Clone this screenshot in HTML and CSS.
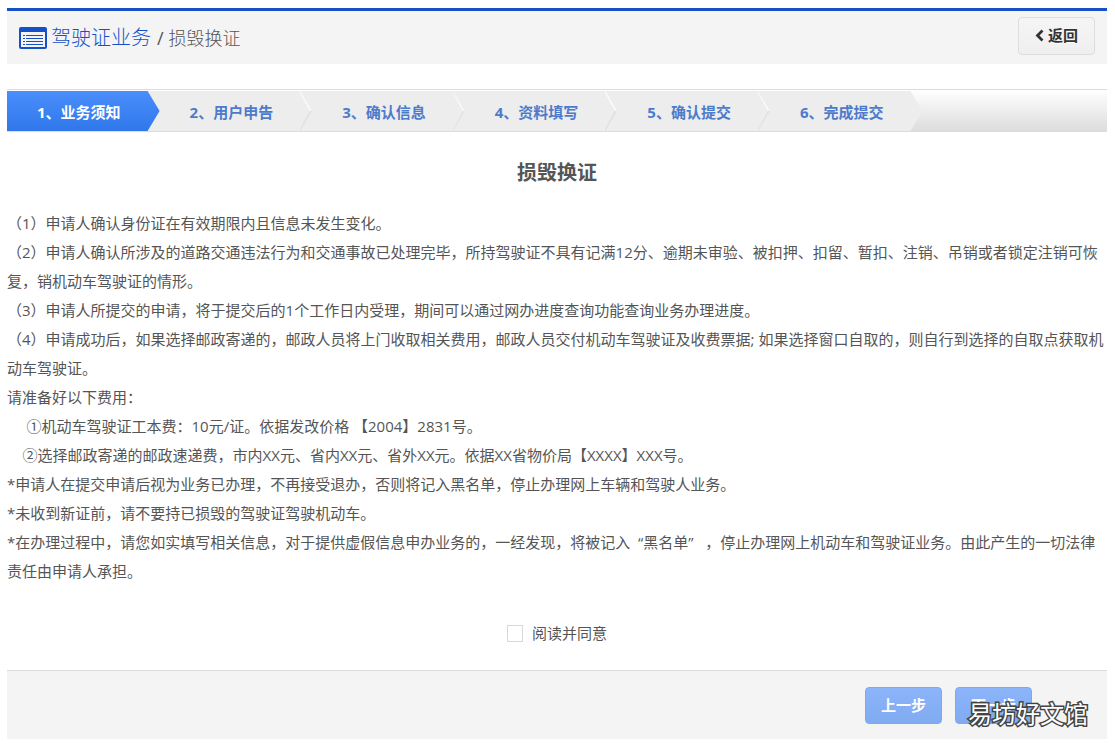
FILE: index.html
```html
<!DOCTYPE html>
<html lang="zh-CN">
<head>
<meta charset="utf-8">
<meta name="viewport" content="width=device-width, initial-scale=1">
<title>驾驶证业务 - 损毁换证</title>
<link rel="stylesheet" href="styles.css">
</head>
<body>
<header class="page-header">
  <svg class="header-icon" viewBox="0 0 28 22" aria-hidden="true">
    <rect x="1" y="1" width="26" height="20" rx="1" fill="#f4f4f4" stroke="#1450c8" stroke-width="2"/>
    <path d="M1 1h26v4H1z" fill="#1450c8"/>
    <path d="M4 8h2v1H4zM4 11h2v1H4zM4 14h2v1H4zM4 17h2v1H4zM7 8h17v1H7zM7 11h17v1H7zM7 14h17v1H7zM7 17h17v1H7z" fill="#1450c8"/>
  </svg>
  <h1 class="header-title">驾驶证业务</h1>
  <span class="header-slash">/</span>
  <span class="header-sub">损毁换证</span>
  <button class="btn btn-back" type="button">
    <svg class="back-icon" viewBox="0 0 9 13" aria-hidden="true"><path d="M7.500 1.500L2.500 6.500l5 5" fill="none" stroke="#333" stroke-width="2.800"/></svg>
    返回
  </button>
</header>

<ol class="steps">
  <li class="step step-active">1、业务须知</li>
  <li class="step">2、用户申告<svg class="step-edge" viewBox="0 0 12 40" preserveAspectRatio="none" aria-hidden="true"><path d="M0 0l11 20" stroke="#fff"/><path d="M11 20L0 40" stroke="#dcdcdc"/></svg></li>
  <li class="step">3、确认信息<svg class="step-edge" viewBox="0 0 12 40" preserveAspectRatio="none" aria-hidden="true"><path d="M0 0l11 20" stroke="#fff"/><path d="M11 20L0 40" stroke="#dcdcdc"/></svg></li>
  <li class="step">4、资料填写<svg class="step-edge" viewBox="0 0 12 40" preserveAspectRatio="none" aria-hidden="true"><path d="M0 0l11 20" stroke="#fff"/><path d="M11 20L0 40" stroke="#dcdcdc"/></svg></li>
  <li class="step">5、确认提交<svg class="step-edge" viewBox="0 0 12 40" preserveAspectRatio="none" aria-hidden="true"><path d="M0 0l11 20" stroke="#fff"/><path d="M11 20L0 40" stroke="#dcdcdc"/></svg></li>
  <li class="step">6、完成提交</li>
</ol>

<main class="notice">
  <h2 class="notice-title">损毁换证</h2>
  <div class="notice-text">
    <p>（1）申请人确认身份证在有效期限内且信息未发生变化。</p>
    <p>（2）申请人确认所涉及的道路交通违法行为和交通事故已处理完毕，所持驾驶证不具有记满12分、逾期未审验、被扣押、扣留、暂扣、注销、吊销或者锁定注销可恢复，销机动车驾驶证的情形。</p>
    <p>（3）申请人所提交的申请，将于提交后的1个工作日内受理，期间可以通过网办进度查询功能查询业务办理进度。</p>
    <p>（4）申请成功后，如果选择邮政寄递的，邮政人员将上门收取相关费用，邮政人员交付机动车驾驶证及收费票据; 如果选择窗口自取的，则自行到选择的自取点获取机动车驾驶证。</p>
    <p>请准备好以下费用：</p>
    <p>&nbsp;&nbsp;&nbsp;&nbsp;&nbsp;①机动车驾驶证工本费：10元/证。依据发改价格 【2004】2831号。</p>
    <p>&nbsp;&nbsp;&nbsp;&nbsp;②选择邮政寄递的邮政速递费，市内XX元、省内XX元、省外XX元。依据XX省物价局【XXXX】XXX号。</p>
    <p>*申请人在提交申请后视为业务已办理，不再接受退办，否则将记入黑名单，停止办理网上车辆和驾驶人业务。</p>
    <p>*未收到新证前，请不要持已损毁的驾驶证驾驶机动车。</p>
    <p>*在办理过程中，请您如实填写相关信息，对于提供虚假信息申办业务的，一经发现，将被记入&nbsp;&nbsp;“黑名单”&nbsp;&nbsp;&nbsp;，停止办理网上机动车和驾驶证业务。由此产生的一切法律责任由申请人承担。</p>
  </div>
  <div class="agree">
    <input class="agree-box" type="checkbox" id="agree">
    <label for="agree">阅读并同意</label>
  </div>
</main>

<footer class="actions">
  <button class="btn btn-primary" type="button">上一步</button>
  <button class="btn btn-primary" type="button">下一步</button>
  <span class="watermark">易坊好文馆</span>
</footer>
</body>
</html>
```
FILE: styles.css
```css
* {
  box-sizing: border-box;
}

body {
  margin: 8px 8px 0 7px;
  background: #fff;
  color: #555;
  font: 15px/20px "Open Sans", "Noto Sans CJK SC", sans-serif;
  text-spacing-trim: space-all;
}

h1, h2, p, ol {
  margin: 0;
  padding: 0;
}

.page-header {
  display: flex;
  align-items: center;
  height: 56px;
  padding: 0 12px;
  border-top: 3px solid #1450c8;
  background: #f4f4f4;
}

.header-icon {
  width: 28px;
  height: 22px;
  margin-right: 4px;
}

.header-title {
  color: #1450c8;
  font-size: 20px;
  font-weight: 300;
  line-height: 28px;
}

.header-slash {
  margin: 0 5px 0 6px;
  font-size: 18px;
}

.header-sub {
  font-size: 18px;
  font-weight: 300;
}

.btn {
  display: flex;
  align-items: center;
  justify-content: center;
  min-width: 77px;
  height: 37px;
  padding: 0 15px 2px;
  border-radius: 4px;
  font: bold 15px/20px "Open Sans", "Noto Sans CJK SC", sans-serif;
}

.btn-back {
  gap: 4px;
  align-self: flex-start;
  height: 38px;
  margin: 6px 0 0 auto;
  border: 1px solid #ddd;
  background: linear-gradient(#f5f5f5, #efefef);
  color: #333;
  text-shadow: 0 1px 0 #fff;
}

.back-icon {
  width: 9px;
  height: 13px;
}

.steps {
  display: flex;
  height: 43px;
  margin-top: 25px;
  padding-top: 1px;
  border: solid #dcdcdc;
  border-width: 1px 0;
  background: linear-gradient(#fff, #dcdcdc);
  list-style: none;
}

.step {
  position: relative;
  flex: none;
  margin-left: -12px;
  padding: 0 39px 0 42px;
  background: #ededed;
  clip-path: polygon(0 0, calc(100% - 12px) 0, 100% 50%, calc(100% - 12px) 100%, 0 100%);
  color: #4d7bcb;
  font-weight: bold;
  line-height: 42px;
}

.step:nth-child(1) { z-index: 6; }
.step:nth-child(2) { z-index: 5; }
.step:nth-child(3) { z-index: 4; }
.step:nth-child(4) { z-index: 3; }
.step:nth-child(5) { z-index: 2; }
.step:nth-child(6) { z-index: 1; }

.step-active {
  margin-left: 0;
  padding-left: 30px;
  background: linear-gradient(#4b8efd, #2f77ea);
  color: #fff;
}

.step-edge {
  position: absolute;
  top: 0;
  right: 0;
  width: 12px;
  height: 100%;
  opacity: 0.7;
  stroke-width: 2;
}

.notice-title {
  padding: 27px 0 22px;
  font-size: 20px;
  line-height: 28px;
  text-align: center;
}

.notice-text {
  line-height: 29px;
}

.agree {
  display: flex;
  align-items: center;
  justify-content: center;
  gap: 9px;
  padding: 37px 0 27px;
}

.agree-box {
  width: 16px;
  height: 17px;
  margin: 0;
  border: 1px solid #d8d8d8;
  background: #fff;
  appearance: none;
}

.agree-box:checked {
  background: #4b8efd;
}

.actions {
  position: relative;
  display: flex;
  justify-content: flex-end;
  gap: 13px;
  padding: 16px 75px 15px 16px;
  border-top: 1px solid #dcdcdc;
  background: #f4f4f4;
}

.btn-primary {
  border: 1px solid #7ea9f0;
  background: linear-gradient(#8bb4fb, #80abf1);
  color: #fff;
}

.watermark {
  position: absolute;
  right: 19px;
  bottom: 9px;
  color: #fff;
  font-size: 24px;
  line-height: 32px;
  -webkit-text-stroke: 3px #444;
  paint-order: stroke fill;
}
```
